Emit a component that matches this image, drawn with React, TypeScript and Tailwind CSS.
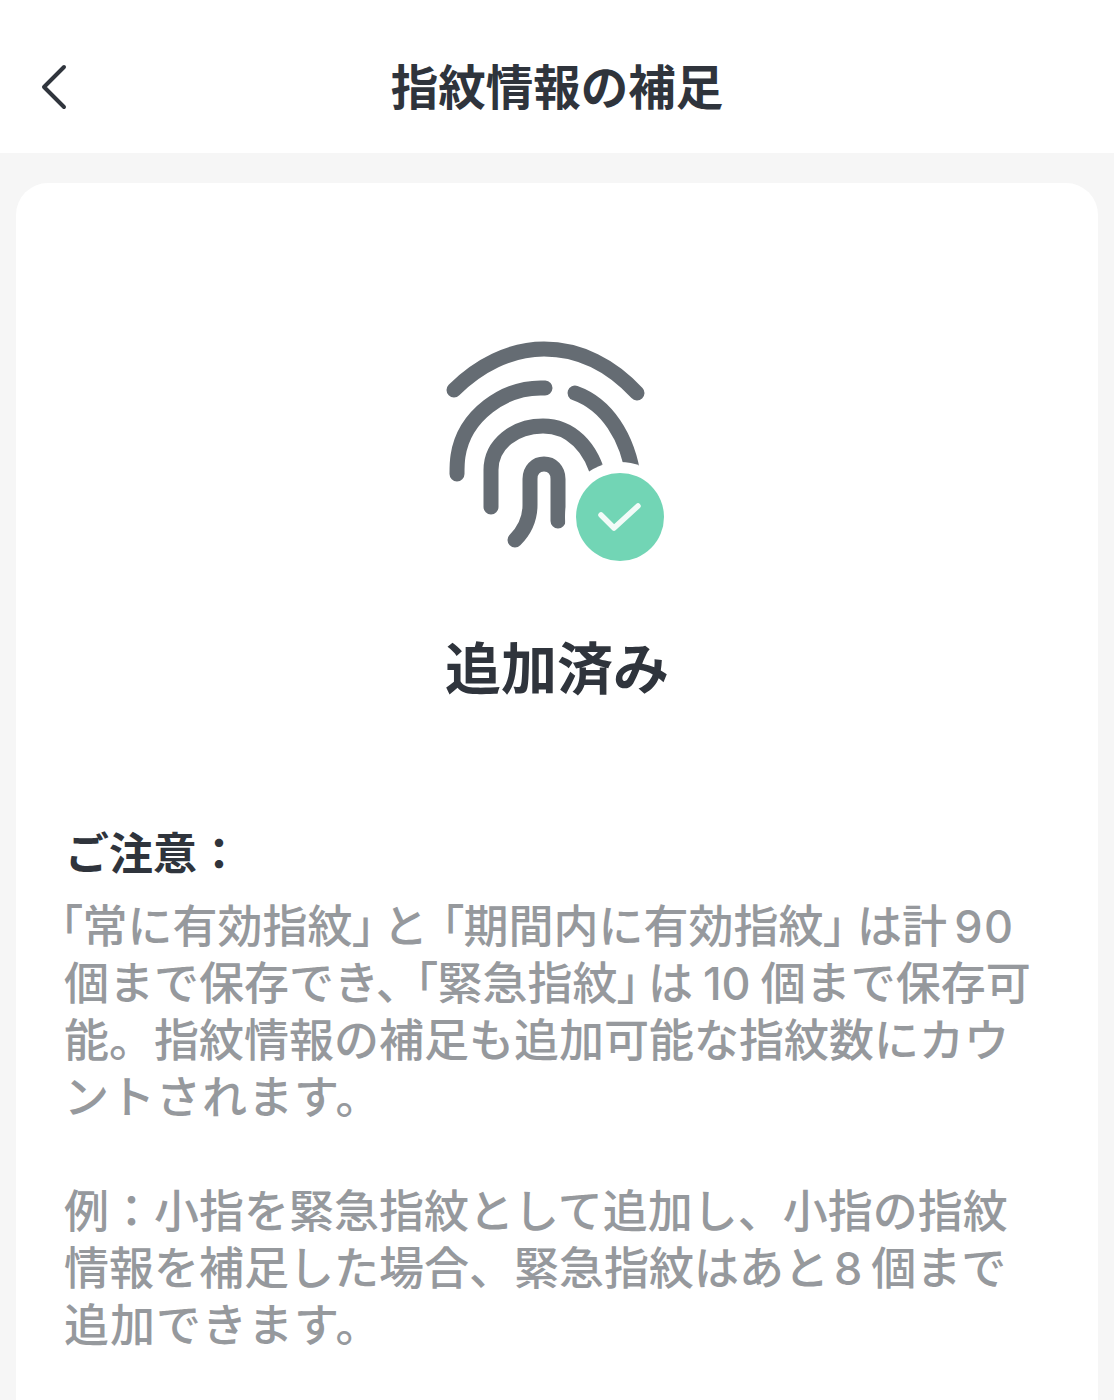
const jp = "font-['Noto_Sans_CJK_JP','Noto_Sans_CJK_SC',sans-serif]";

function Fingerprint() {
  return (
    <svg width="270" height="260" viewBox="420 320 270 260" fill="none" className="block">
      <g stroke="#656c73" strokeWidth="15" strokeLinecap="round">
        <path d="M454 390 C 478 366 510 349 544 349 C 580 349 612 366 637 393" />
        <path d="M457 474 C 457 468 457 462 458 456 C 464 416 504 386 545 388" />
        <path d="M575 393 C 606 404 628 436 634 480" />
        <path d="M491 507 L 491 470 C 491 444 515 426 543 426 C 570 426 592 446 600 482" />
        <path d="M515 540 C 525 530 530 518 530 505 L 530 479 C 530 470 536 464 544 464 C 552 464 558 470 558 479 L 558 521" />
      </g>
      <circle cx="620" cy="517" r="55" fill="#ffffff" />
      <circle cx="620" cy="517" r="44" fill="#72d5b5" />
      <path d="M601 515 L 614 528 L 638 506" stroke="#f2fbf8" strokeWidth="5.5" strokeLinecap="round" strokeLinejoin="round" />
    </svg>
  );
}

function B({ children, className = "" }: { children: string; className?: string }) {
  return <span className={`[font-feature-settings:'palt'] ${className}`}>{children}</span>;
}

function N({ children, className = "mx-[10px]" }: { children: string; className?: string }) {
  return <span className={`font-['Inter',sans-serif] font-medium ${className}`}>{children}</span>;
}

function Line({ children, className = "" }: { children: React.ReactNode; className?: string }) {
  return <div className={`h-[57px] ${className}`}>{children}</div>;
}

export default function App() {
  return (
    <div className={`h-[1400px] overflow-hidden bg-[#f6f6f6] ${jp}`}>
      <header className="relative flex h-[153px] items-center justify-center bg-white">
        <svg width="30" height="46" viewBox="0 0 30 46" fill="none" className="absolute left-[40px] top-[64px]">
          <path d="M24 3 L4 23 L24 43" stroke="#30353d" strokeWidth="4" strokeLinecap="round" strokeLinejoin="round" />
        </svg>
        <h1 className="mt-[17px] text-[47.5px] leading-none font-bold text-[#2f343c]">指紋情報の補足</h1>
      </header>
      <main className="mx-4 mt-[30px] h-[1300px] rounded-[32px] bg-white px-[48px] pt-[137px]">
        <div className="flex justify-center">
          <div className="ml-[-4px]"><Fingerprint /></div>
        </div>
        <h2 className="mt-[57px] text-center text-[56px] leading-none font-bold text-[#2f343c]">追加済み</h2>
        <h3 className="mt-[130px] ml-[1px] text-[44px] leading-[57px] font-bold text-[#2f343c]">ご注意：</h3>
        <div className="mt-[15px] text-[45px] leading-[57px] font-medium whitespace-nowrap text-[#96999d]">
          <Line>
            <B className="ml-[-4px]">「</B>常に有効指紋<B className="mr-[8px]">」</B>と<B className="ml-[13px]">「</B>期間内に有効指紋<B className="mr-[11px]">」</B>は計<N className="ml-[7px] tracking-[1.5px]">90</N>
          </Line>
          <Line>
            個まで保存でき、<B className="ml-[-6px]">「</B>緊急指紋<B className="mr-[8px]">」</B>は<N>10</N>個まで保存可
          </Line>
          <Line>能。指紋情報の補足も追加可能な指紋数にカウ</Line>
          <Line className="tracking-[1px]">ントされます。</Line>
          <Line className="mt-[57px]">例：小指を緊急指紋として追加し、小指の指紋</Line>
          <Line>
            情報を補足した場合、緊急指紋はあと<N className="ml-[5px] mr-[9px]">8</N>個まで
          </Line>
          <Line className="tracking-[1px]">追加できます。</Line>
        </div>
      </main>
    </div>
  );
}
